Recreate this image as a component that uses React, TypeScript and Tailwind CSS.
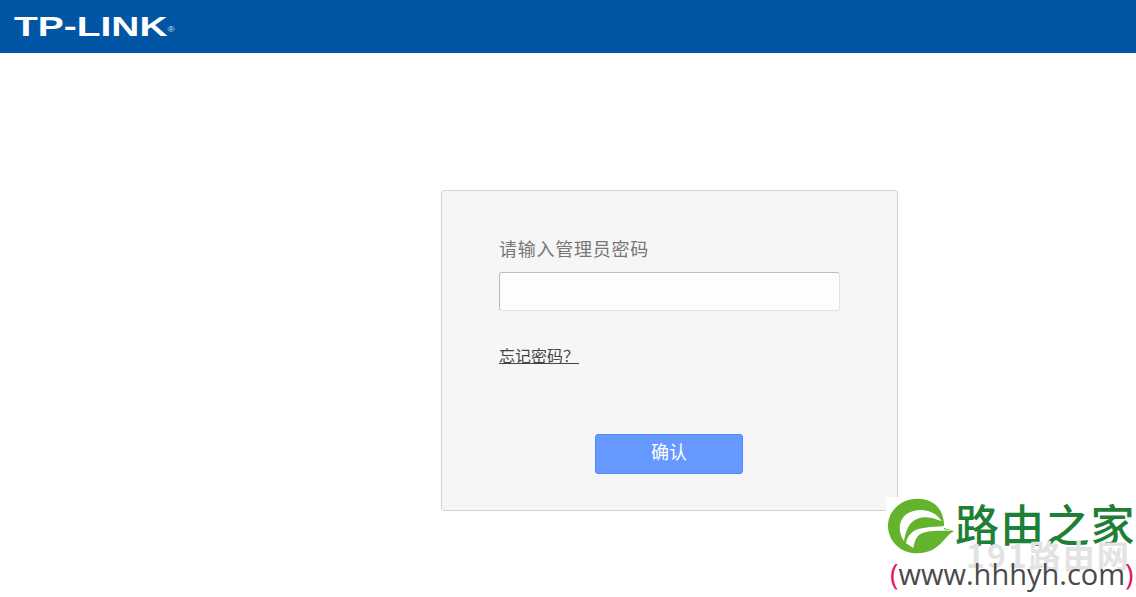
const cjk = "font-['Liberation_Serif','Noto_Sans_CJK_SC',sans-serif]";

function LeafLogo() {
  return (
    <svg className="shrink-0" width="70" height="60" viewBox="6 3 210 180">
      <path
        d="M100 8 C150 8 178 40 180 84 L180 96 L210 106 C180 118 170 172 98 172 C50 172 12 135 12 90 C12 45 50 8 100 8 Z"
        fill="#63b32e"
      />
      <path d="M60 136 C40 105 44 72 68 54 C100 34 150 38 173 76 C140 60 105 58 84 78 C70 92 64 112 60 136 Z" fill="#fff" />
      <path d="M66 142 C70 118 86 100 118 96 C140 93 160 92 180 90 L180 100 L205 105 C160 104 120 102 102 120 C94 130 90 142 88 156 Z" fill="#fff" />
    </svg>
  );
}

function Watermark() {
  return (
    <div className="absolute right-0 top-[497px] flex h-[100px] w-[250px] flex-col bg-white">
      <div className="flex h-[60px] items-start">
        <LeafLogo />
        <span className="-ml-[1px] -mt-[4px] text-[44px] leading-[60px] font-medium tracking-[1.2px] whitespace-nowrap text-[#1e7f36] font-['Noto_Sans_CJK_SC',sans-serif]">
          路由之家
        </span>
      </div>
      <span className="absolute left-[80px] top-[37px] text-[32px] leading-[40px] font-bold tracking-[2px] whitespace-nowrap text-[#e3e3e3] font-['Noto_Sans_CJK_SC',sans-serif]">
        191路由网
      </span>
      <span className="relative -mt-[1px] pl-[4px] text-[29px] leading-[36px] whitespace-nowrap text-[#4a4a4a] font-['Open_Sans',sans-serif]">
        <span className="text-[#e5185a]">(</span>www.hhhyh.com<span className="text-[#e5185a]">)</span>
      </span>
    </div>
  );
}

export default function App() {
  return (
    <div className="relative h-[597px] w-[1136px] overflow-hidden bg-white">
      <header className="flex h-[53px] items-center bg-[#0055a5] pl-[14px]">
        <span className="origin-left scale-x-[1.39] text-[28px] leading-[30px] font-bold whitespace-nowrap text-white font-['Liberation_Sans',sans-serif]">
          TP-LINK<sup className="text-[7px] font-normal text-[#cfe0f2]">®</sup>
        </span>
      </header>

      <div className="ml-[441px] mt-[137px] flex h-[321px] w-[457px] flex-col items-start rounded-[3px] border border-[#d2d2d2] bg-[#f6f6f6] pl-[57px] pt-[46px]">
        <p className={`text-[18px] leading-[26px] tracking-[0.75px] text-[#777] ${cjk}`}>请输入管理员密码</p>
        <input
          type="password"
          className="mt-[9px] h-[39px] w-[341px] rounded-[3px] border border-[#e2e2e2] border-t-[#bdbdbd] border-l-[#b8b8b8] bg-[#fdfdfd] outline-none"
        />
        <a className={`mt-[35px] text-[16px] leading-[22px] text-[#444] underline ${cjk}`}>忘记密码？</a>
        <button className={`ml-[96px] mt-[66px] h-[40px] w-[148px] rounded-[3px] border border-[#4d88ff] bg-[#6699ff] pb-[2px] text-[18px] text-white ${cjk}`}>
          确认
        </button>
      </div>

      <Watermark />
    </div>
  );
}
